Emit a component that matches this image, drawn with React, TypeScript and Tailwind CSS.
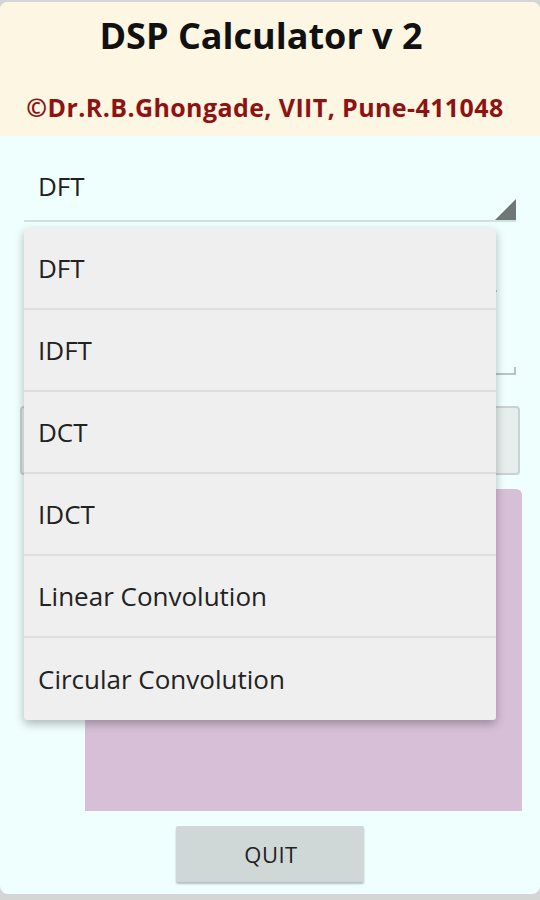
import React from 'react';

const ops = ['DFT', 'IDFT', 'DCT', 'IDCT', 'Linear Convolution', 'Circular Convolution'];

const font = { fontFamily: '"Open Sans", Roboto, "Noto Sans", sans-serif' };

function Spinner({ value }: { value: string }) {
    return (
        <div className="relative mx-[24px] h-[72px] border-b-2 border-[#cfe1de] flex items-center">
            <span className="pl-[14px] pt-[2px] text-[26px] text-[#1f1f1f]">{value}</span>
            {/* corner arrow of the android spinner */}
            <svg className="absolute right-0 bottom-0" width="21" height="21" viewBox="0 0 21 21">
                <polygon points="21,0 21,21 0,21" fill="#6f7676" />
            </svg>
        </div>
    );
}

function DropdownMenu({ items }: { items: string[] }) {
    return (
        <div className="absolute left-[24px] top-[226px] w-[472px] bg-[#efefef] rounded-[3px] shadow-[0_4px_10px_rgba(0,0,0,0.28)]">
            {items.map((item, i) => (
                <div
                    key={item}
                    className={
                        i < items.length - 1
                            ? 'h-[82px] flex items-center pl-[14px] border-b-2 border-[#dddddd] text-[26px] text-[#222]'
                            : 'h-[82px] flex items-center pl-[14px] text-[26px] text-[#222]'
                    }
                >
                    {item}
                </div>
            ))}
        </div>
    );
}

export default function App() {
    return (
        <div className="w-[540px] h-[900px] bg-[#d4d6d6] overflow-hidden" style={font}>
            <div className="relative mt-[2px] h-[892px] bg-[#effffe] rounded-[8px] overflow-hidden">
                {/* header */}
                <div className="h-[134px] bg-[#fdf6e2] flex flex-col items-center">
                    <div className="mt-[13px] pr-[18px] text-[36px] font-bold text-[#111] leading-[42px]">
                        DSP Calculator v 2
                    </div>
                    <div className="mt-[35px] pr-[10px] text-[25px] font-bold tracking-[0.4px] text-[#8e1212] leading-[30px]">
                        ©Dr.R.B.Ghongade, VIIT, Pune-411048
                    </div>
                </div>

                <div className="pt-[14px]">
                    <Spinner value="DFT" />

                    {/* inputs hidden under the open menu */}
                    <div className="mx-[24px] mt-[30px] h-[40px] border-b-2 border-[#b9c4c2] w-[473px]" />
                    <div className="mx-[24px] mt-[10px] h-[73px] border-b-2 border-[#b9c4c2] relative">
                        <div className="absolute right-[22px] top-[44px] w-[3px] h-[14px] bg-[#e0a010]" />
                        <div className="absolute right-0 bottom-0 w-[2px] h-[6px] bg-[#b9c4c2]" />
                    </div>
                    <div className="mx-[20px] mt-[31px] h-[69px] bg-[#e5eded] border-2 border-[#c8d2d1] rounded-[4px]" />

                    <div className="ml-[85px] mr-[18px] mt-[14px] h-[322px] bg-[#d8bfd8] rounded-tr-[6px]" />

                    <div className="flex justify-center mt-[15px]">
                        <button className="w-[188px] h-[56px] bg-[#cfd8d7] rounded-[2px] shadow-[0_2px_2px_rgba(0,0,0,0.25)] text-[22px] tracking-[0.5px] text-[#222] pl-[2px]">
                            QUIT
                        </button>
                    </div>
                </div>

                <DropdownMenu items={ops} />
            </div>
        </div>
    );
}
